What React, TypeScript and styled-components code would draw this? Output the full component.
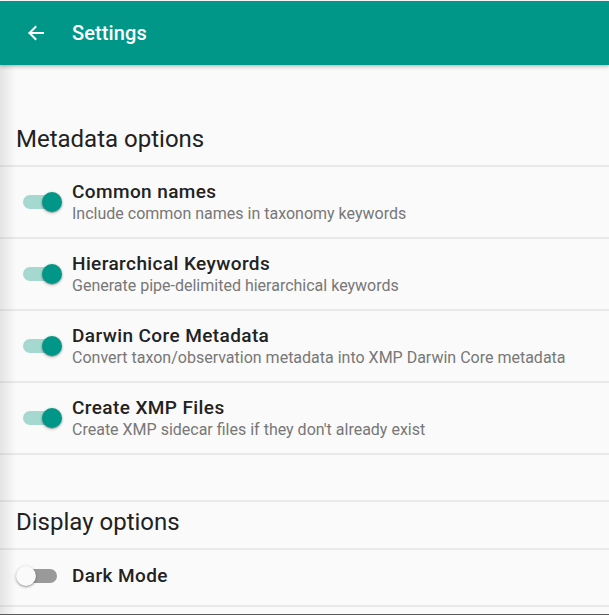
import React from "react";
import styled, { createGlobalStyle } from "styled-components";

const Global = createGlobalStyle`
  html, body { margin: 0; padding: 0; background: #fafafa; }
  body { font-family: Roboto, "Noto Sans", Arial, sans-serif; }
  * { box-sizing: border-box; }
`;

const Page = styled.div`
  position: relative;
  width: 609px;
  height: 615px;
  overflow: hidden;
  background: #fafafa;
  padding-top: 1px;
  display: flex;
  flex-direction: column;
`;

const AppBar = styled.header`
  position: relative;
  z-index: 2;
  height: 64px;
  flex: none;
  background: #009688;
  display: flex;
  align-items: center;
  padding-left: 24px;
  gap: 24px;
  box-shadow: 0 2px 4px rgba(0, 0, 0, 0.18), 0 1px 2px rgba(0, 0, 0, 0.1);
`;

const Title = styled.h1`
  margin: 0;
  font-size: 20px;
  font-weight: 500;
  color: #fff;
  letter-spacing: 0.1px;
`;

const Content = styled.main`
  position: relative;
  flex: 1;
  display: flex;
  flex-direction: column;
  padding-top: 54px;
`;

const EdgeShade = styled.div`
  position: absolute;
  left: 0;
  top: 0;
  bottom: 0;
  width: 16px;
  background: linear-gradient(to right, rgba(0, 0, 0, 0.09), rgba(0, 0, 0, 0));
  pointer-events: none;
`;

const Section = styled.section<{ $gap?: number }>`
  display: flex;
  flex-direction: column;
  margin-top: ${(p) => p.$gap ?? 0}px;
`;

const SectionHeading = styled.h2<{ $topLine?: boolean }>`
  margin: 0;
  height: ${(p) => (p.$topLine ? 50 : 48)}px;
  display: flex;
  align-items: center;
  padding-left: 16px;
  padding-bottom: 6px;
  font-size: 24px;
  font-weight: 400;
  color: #222;
  border-top: ${(p) => (p.$topLine ? "2px solid #e9e9e9" : "none")};
  border-bottom: 2px solid #e9e9e9;
`;

const Row = styled.div<{ $h: number; $pb: number }>`
  height: ${(p) => p.$h}px;
  display: flex;
  align-items: center;
  padding-left: 16px;
  padding-bottom: ${(p) => p.$pb}px;
  border-bottom: 2px solid #e9e9e9;
`;

const SwitchBox = styled.div`
  position: relative;
  width: 46px;
  height: 20px;
  flex: none;
  margin-right: 10px;
`;

const Track = styled.div<{ $on: boolean }>`
  position: absolute;
  left: 7px;
  top: 3px;
  width: 34px;
  height: 14px;
  border-radius: 7px;
  background: ${(p) => (p.$on ? "#a6d8d2" : "#9a9a9a")};
`;

const Thumb = styled.div<{ $on: boolean }>`
  position: absolute;
  top: 0;
  left: ${(p) => (p.$on ? 26 : 0)}px;
  width: 20px;
  height: 20px;
  border-radius: 50%;
  background: ${(p) => (p.$on ? "#009688" : "#fafafa")};
  box-shadow: 0 1px 3px rgba(0, 0, 0, 0.35), 0 1px 1px rgba(0, 0, 0, 0.12);
`;

const Texts = styled.div`
  display: flex;
  flex-direction: column;
  gap: 1px;
`;

const RowTitle = styled.div`
  font-size: 19px;
  font-weight: 500;
  color: #222;
  line-height: 22px;
  letter-spacing: 0.4px;
`;

const RowSub = styled.div`
  font-size: 16px;
  color: #777;
  line-height: 19px;
`;

const BottomEdge = styled.div`
  position: absolute;
  left: 0;
  right: 0;
  bottom: 0;
  height: 1px;
  background: #5a5a5a;
`;

const Switch = ({ on }: { on: boolean }) => (
  <SwitchBox>
    <Track $on={on} />
    <Thumb $on={on} />
  </SwitchBox>
);

const BackArrow = () => (
  <svg width="24" height="24" viewBox="0 0 24 24" fill="none" stroke="#fff" strokeWidth="2" strokeLinecap="square">
    <path d="M19 12H5.5M11.5 6l-6 6 6 6" />
  </svg>
);

const items = [
  { title: "Common names", sub: "Include common names in taxonomy keywords" },
  { title: "Hierarchical Keywords", sub: "Generate pipe-delimited hierarchical keywords" },
  { title: "Darwin Core Metadata", sub: "Convert taxon/observation metadata into XMP Darwin Core metadata" },
  { title: "Create XMP Files", sub: "Create XMP sidecar files if they don't already exist" },
];

export default function App() {
  return (
    <>
      <Global />
      <Page>
        <AppBar>
          <BackArrow />
          <Title>Settings</Title>
        </AppBar>
        <Content>
          <EdgeShade />
          <Section>
            <SectionHeading>Metadata options</SectionHeading>
            {items.map((it) => (
              <Row key={it.title} $h={72} $pb={0}>
                <Switch on />
                <Texts>
                  <RowTitle>{it.title}</RowTitle>
                  <RowSub>{it.sub}</RowSub>
                </Texts>
              </Row>
            ))}
          </Section>
          <Section $gap={45}>
            <SectionHeading $topLine>Display options</SectionHeading>
            <Row $h={57} $pb={3}>
              <Switch on={false} />
              <Texts>
                <RowTitle>Dark Mode</RowTitle>
              </Texts>
            </Row>
          </Section>
        </Content>
        <BottomEdge />
      </Page>
    </>
  );
}
